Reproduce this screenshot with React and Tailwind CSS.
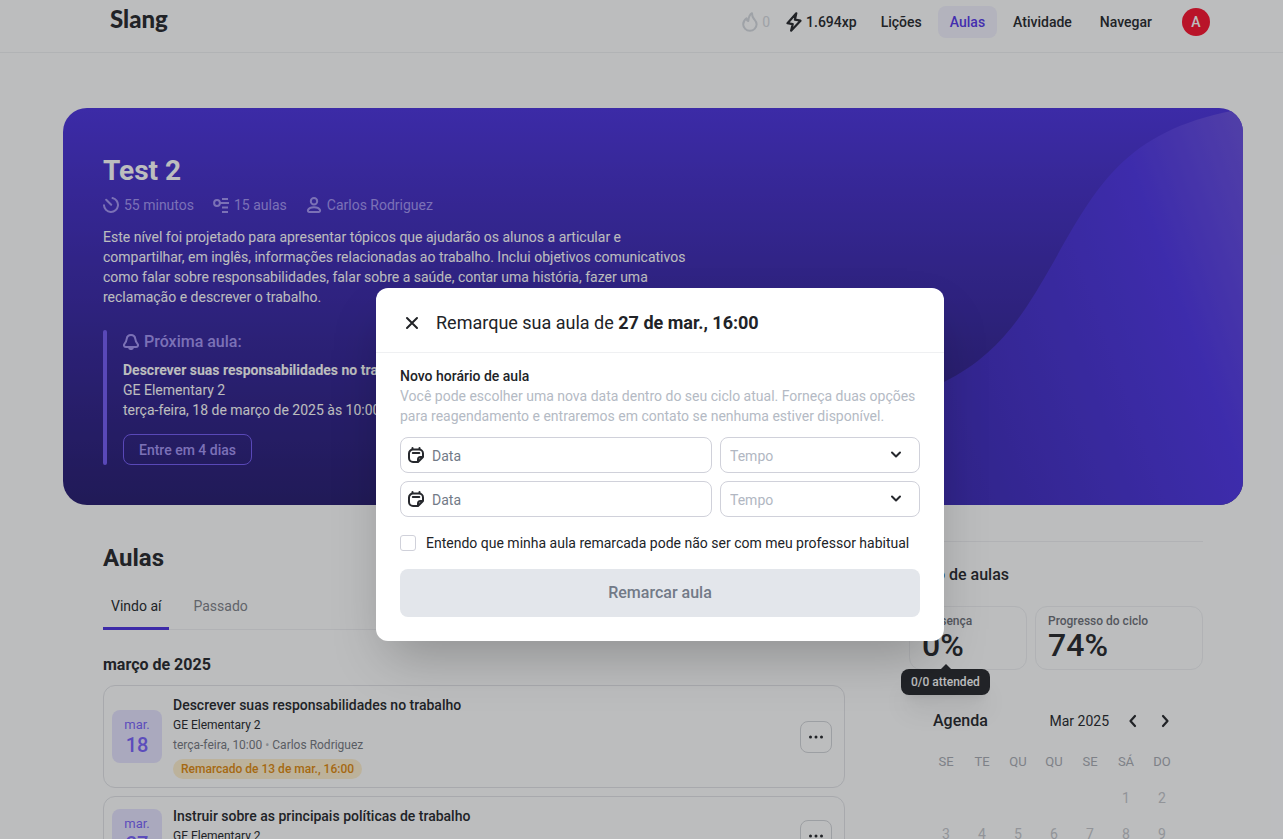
import React from "react";

const base = { fill: "none", stroke: "currentColor", strokeLinecap: "round", strokeLinejoin: "round", "aria-hidden": true };

const FlameIcon = () => (
  <svg {...base} className="h-5 w-4" viewBox="0 0 16 20" strokeWidth="2">
    <path d="M10 1.200C7 3 6.600 5.500 6.300 9c-1.200-.6-1.700-1.500-1.800-2.700C2.600 7.800 1.200 9.800 1.200 12.200c0 3.700 3 6.600 6.700 6.600s6.700-2.900 6.700-6.500c0-2.600-1.200-3.600-2.600-5.300C10.800 5.500 10 3.700 10 1.200z" />
  </svg>
);

const BoltIcon = () => (
  <svg {...base} className="h-5 w-4" viewBox="0 0 16 20" strokeWidth="2.200">
    <path d="M10.300 1.300L1.500 11.200l5.200 1-1.600 6.500 9.400-10-5.600-1z" />
  </svg>
);

const TimerIcon = () => (
  <svg {...base} className="size-4" viewBox="0 0 16 16" strokeWidth="2">
    <path d="M9.500 1.100A7 7 0 1 1 1 8.200M3.200 2.800L8.200 7.800" />
  </svg>
);

const LessonsIcon = () => (
  <svg {...base} className="size-4" viewBox="0 0 16 16" strokeWidth="2" strokeLinecap="butt">
    <circle cx="4" cy="6" r="2.900" />
    <path d="M9 2H15M7 6h9M9 10.500H15M9 15H15" />
  </svg>
);

const PersonIcon = () => (
  <svg {...base} className="size-4" viewBox="0 0 16 16" strokeWidth="2">
    <circle cx="8" cy="4.200" r="3.200" />
    <path d="M3.600 15h8.800c1.400 0 2.100-1 1.500-2.200C13 11 10.600 10.200 8 10.200S3 11 2.100 12.800C1.500 14 2.200 15 3.600 15z" />
  </svg>
);

const BellIcon = () => (
  <svg {...base} className="size-4" viewBox="0 0 16 16" strokeWidth="2">
    <path d="M8 1C5.300 1 4 2.800 3.700 4.800 3.400 7 3.100 7.800 1.800 9.300.3 11 .8 13 2.800 13h10.400c2 0 2.500-2 1-3.700-1.300-1.500-1.600-2.300-1.900-4.500C12 2.800 10.700 1 8 1zM6 13.300c.2 1.200 1 1.800 2 1.800s1.800-.6 2-1.800" />
  </svg>
);

const CalendarIcon = () => (
  <svg {...base} className="size-4" viewBox="0 0 16 16" strokeWidth="2">
    <path d="M10 15H5a4 4 0 0 1-4-4V6.500a4 4 0 0 1 4-4h6a4 4 0 0 1 4 4V10l-5 5zM10 14.800V12.500A2.500 2.500 0 0 1 12.500 10H15M4.500 1v1M11.500 1v1M4.800 6h6.500" />
  </svg>
);

const ChevronDown = () => (
  <svg {...base} className="pointer-events-none col-start-1 row-start-1 mr-4 h-3 w-4 self-center justify-self-end text-[#26282d]" viewBox="0 0 16 12" strokeWidth="2">
    <path d="M4 3.500l4 4 4-4" />
  </svg>
);

const Dots = () => (
  <svg className="h-1 w-4" viewBox="0 0 16 4" fill="currentColor" aria-hidden="true">
    <circle cx="2.500" cy="2" r="1.500" />
    <circle cx="8" cy="2" r="1.500" />
    <circle cx="13.500" cy="2" r="1.500" />
  </svg>
);

function Header() {
  return (
    <header className="border-b border-[#f0f1f3] pt-1.5 pr-[73px] pb-3.5 pl-[110px]">
      <div className="flex h-8 items-center justify-between">
        <a href="#inicio" className="self-start font-[Lato] text-2xl leading-[26px] font-black">Slang</a>
        <div className="flex items-center">
          <div className="flex items-center gap-1 text-[#d5d8de]">
            <FlameIcon />
            <span>0</span>
          </div>
          <div className="mr-3 ml-4 flex items-center gap-1 font-medium">
            <BoltIcon />
            <span>1.694xp</span>
          </div>
          <nav className="mr-[18px] flex gap-1 font-medium">
            <a href="#licoes" className="px-3 py-1.5">Lições</a>
            <a href="#aulas" aria-current="page" className="rounded-lg bg-[#f2f1fe] px-3 py-1.5 text-[#5333ea]">Aulas</a>
            <a href="#atividade" className="px-3 py-1.5">Atividade</a>
            <a href="#navegar" className="px-3 py-1.5">Navegar</a>
          </nav>
          <button className="size-7 rounded-full bg-[#fb0d2a] font-medium text-white" aria-label="Conta">A</button>
        </div>
      </div>
    </header>
  );
}

function Hero() {
  return (
    <section className="relative overflow-hidden rounded-3xl bg-linear-to-b from-[#482ede] to-[#21166c] px-10 pt-[45px] pb-10 text-white">
      <svg className="absolute top-0 right-0 h-full w-[400px]" viewBox="0 0 400 397" preserveAspectRatio="none" aria-hidden="true">
        <defs>
          <linearGradient id="wave" gradientUnits="userSpaceOnUse" x1="-36" y1="13" x2="355" y2="-127">
            <stop offset="0" stopColor="#3825b4" />
            <stop offset="0.7" stopColor="#4a30e5" />
            <stop offset="1" stopColor="#674cdf" />
          </linearGradient>
        </defs>
        <path fill="url(#wave)" d="M400 1C285 20 255 75 210 155C185 198 160 245 101 274C65 290 30 300 0 305V397H400Z" />
      </svg>
      <div className="relative">
        <h1 className="text-[28px] leading-9 font-bold">Test 2</h1>
        <div className="mt-1.5 flex gap-[19px] text-[#a393f4]">
          <span className="flex items-center gap-[5px]"><TimerIcon />55 minutos</span>
          <span className="flex items-center gap-[5px]"><LessonsIcon />15 aulas</span>
          <span className="flex items-center gap-[5px]"><PersonIcon />Carlos Rodriguez</span>
        </div>
        <p className="mt-3 max-w-[600px]">
          Este nível foi projetado para apresentar tópicos que ajudarão os alunos a articular e compartilhar, em inglês, informações relacionadas ao trabalho. Inclui objetivos comunicativos como falar sobre responsabilidades, falar sobre a saúde, contar uma história, fazer uma reclamação e descrever o trabalho.
        </p>
        <div className="mt-[23px] flex gap-4">
          <div className="w-1 rounded-sm bg-[#7258f6]" />
          <div>
            <h2 className="flex items-center gap-[5px] text-base leading-6 font-medium text-[#a393f4]"><BellIcon />Próxima aula:</h2>
            <p className="mt-1.5 font-bold">Descrever suas responsabilidades no trabalho</p>
            <p>GE Elementary 2</p>
            <p>terça-feira, 18 de março de 2025 às 10:00</p>
            <button className="mt-3.5 block h-[31px] rounded-lg border border-[#7258f6] px-[15px] font-medium text-[#a393f4]">Entre em 4 dias</button>
          </div>
        </div>
      </div>
    </section>
  );
}

function LessonCard({ day, title, time, note }) {
  return (
    <article className="flex items-center gap-[11px] rounded-xl border border-[#e2e3e7] py-2 pr-3 pl-2">
      <div className="w-[50px] rounded-lg bg-[#e6e3ff] py-1.5 text-center text-[#765efc]">
        <div className="text-[13px] leading-[18px]">mar.</div>
        <div className="text-xl leading-[23px] font-medium">{day}</div>
      </div>
      <div className="flex-1 pt-px text-xs leading-5">
        <h3 className="text-sm leading-5 font-medium">{title}</h3>
        <p className="leading-5">GE Elementary 2</p>
        <p className="leading-5 text-[#73767d]">{time} <span className="text-[#b4b7bd]">•</span> Carlos Rodriguez</p>
        {note && (
          <p className="mt-1 w-fit rounded-full bg-[#fff0cd] px-2 leading-5 font-medium text-[#e08708]">{note}</p>
        )}
      </div>
      <button aria-label="Mais opções" className="flex size-8 items-center justify-center rounded-lg border border-[#d2d4d8]"><Dots /></button>
    </article>
  );
}

function Lessons() {
  return (
    <section className="min-w-0 flex-1">
      <h2 className="pt-px text-2xl leading-8 font-bold">Aulas</h2>
      <div className="mt-3 flex gap-4 border-b border-[#eff0f2]" role="tablist">
        <button role="tab" aria-selected="true" className="-mb-px h-11 border-b-3 border-[#4a2ee0] px-2 pb-0.5">Vindo aí</button>
        <button role="tab" aria-selected="false" className="-mb-px h-11 border-b-3 border-transparent px-2 pb-0.5 text-[#7d8087]">Passado</button>
      </div>
      <h3 className="mt-[23px] text-base leading-6 font-bold">março de 2025</h3>
      <div className="mt-2 flex flex-col gap-2">
        <LessonCard day="18" title="Descrever suas responsabilidades no trabalho" time="terça-feira, 10:00" note="Remarcado de 13 de mar., 16:00" />
        <LessonCard day="27" title="Instruir sobre as principais políticas de trabalho" time="quinta-feira, 16:00" />
      </div>
    </section>
  );
}

const weekdays = ["SE", "TE", "QU", "QU", "SE", "SÁ", "DO"];
const weeks = [
  ["", "", "", "", "", 1, 2],
  [3, 4, 5, 6, 7, 8, 9],
];

function Sidebar() {
  return (
    <aside className="w-[294px] shrink-0 border-t border-[#eff0f2] pt-[21px]">
      <h2 className="text-base leading-6 font-medium">Ciclo de aulas</h2>
      <div className="mt-[19px] flex gap-2">
        <div className="relative w-[118px] rounded-xl border border-[#eff0f2] px-3 pt-1.5 pb-2">
          <div className="text-xs leading-4 font-medium text-[#6b6e76]">Presença</div>
          <div className="text-[32px] leading-8 font-medium">0%</div>
          <div role="tooltip" className="absolute top-[62px] -left-[9px] rounded-lg bg-[#212327] px-2.5 py-[3px] text-xs leading-5 font-medium whitespace-nowrap text-white shadow-xl">
            <svg className="absolute -top-[5px] left-[39px] h-[6px] w-3" viewBox="0 0 12 6" aria-hidden="true"><path d="M0 6L6 0l6 6z" fill="#212327" /></svg>
            0/0 attended
          </div>
        </div>
        <div className="flex-1 rounded-xl border border-[#eff0f2] px-3 pt-1.5 pb-2">
          <div className="text-xs leading-4 font-medium text-[#6b6e76]">Progresso do ciclo</div>
          <div className="text-[32px] leading-8 font-medium">74%</div>
        </div>
      </div>
      <div className="mt-[39px] flex items-center pr-[30px] pl-6">
        <h2 className="flex-1 text-base leading-6 font-medium">Agenda</h2>
        <span>Mar 2025</span>
        <button aria-label="Mês anterior" className="ml-4">
          <svg {...base} className="size-4" viewBox="0 0 16 16" strokeWidth="2.200"><path d="M10 3L5.500 8l4.500 5" /></svg>
        </button>
        <button aria-label="Próximo mês" className="ml-4">
          <svg {...base} className="size-4" viewBox="0 0 16 16" strokeWidth="2.200"><path d="M6 3l4.500 5L6 13" /></svg>
        </button>
      </div>
      <table className="mt-[11px] ml-[19px] table-fixed text-center">
        <thead>
          <tr className="h-9 text-[13px] text-[#a6a9b1]">
            {weekdays.map((d, i) => <th key={i} scope="col" className="w-9 font-normal">{d}</th>)}
          </tr>
        </thead>
        <tbody>
          {weeks.map((w, i) => (
            <tr key={i} className="h-9 text-[#c3c5ca]">
              {w.map((d, j) => <td key={j} className="w-9">{d}</td>)}
            </tr>
          ))}
        </tbody>
      </table>
    </aside>
  );
}

function SlotRow({ index }) {
  return (
    <div className="flex gap-2">
      <label className="flex h-9 flex-1 items-center gap-2 rounded-lg border border-[#d0d1da] pl-[7px]">
        <span className="text-[#26282d]"><CalendarIcon /></span>
        <input type="text" placeholder="Data" aria-label={`Data ${index}`} className="min-w-0 flex-1 bg-transparent pt-0.5 outline-none placeholder:text-[#727a87]" />
      </label>
      <div className="grid w-[200px]">
        <select aria-label={`Tempo ${index}`} defaultValue="" className="col-start-1 row-start-1 h-9 appearance-none rounded-lg border border-[#d0d1da] bg-white px-[9px] pt-0.5 text-[#b1b7c2]">
          <option value="">Tempo</option>
          <option>10:00</option>
          <option>16:00</option>
        </select>
        <ChevronDown />
      </div>
    </div>
  );
}

function RescheduleDialog() {
  return (
    <div className="absolute inset-0 flex items-start justify-center bg-[#212429]/30 pt-72 pl-[37px]">
      <div role="dialog" aria-modal="true" aria-labelledby="dialog-title" className="w-full max-w-[568px] rounded-xl bg-white shadow-2xl">
        <div className="flex items-center gap-4 border-b border-[#eff0f2] px-7 pt-[21px] pb-[15px]">
          <button aria-label="Fechar">
            <svg {...base} className="size-4" viewBox="0 0 16 16" strokeWidth="2"><path d="M3 3l10 10M13 3L3 13" /></svg>
          </button>
          <h2 id="dialog-title" className="text-lg leading-7">Remarque sua aula de <b className="font-bold">27 de mar., 16:00</b></h2>
        </div>
        <form className="px-6 pt-[13px] pb-6">
          <h3 className="font-medium">Novo horário de aula</h3>
          <p className="text-[#b4bac4]">
            Você pode escolher uma nova data dentro do seu ciclo atual. Forneça duas opções para reagendamento e entraremos em contato se nenhuma estiver disponível.
          </p>
          <div className="mt-[11px] flex flex-col gap-2">
            <SlotRow index={1} />
            <SlotRow index={2} />
          </div>
          <label className="mt-4 flex items-center gap-2.5">
            <input type="checkbox" className="size-4 appearance-none rounded-[3px] border border-[#d0d1da]" />
            Entendo que minha aula remarcada pode não ser com meu professor habitual
          </label>
          <button type="button" disabled className="mt-4 h-12 w-full rounded-lg bg-[#e3e6eb] text-base font-medium text-[#727a87]">Remarcar aula</button>
        </form>
      </div>
    </div>
  );
}

export default function App() {
  return (
    <div className="relative h-screen overflow-hidden bg-white font-[Roboto,sans-serif] text-sm leading-5 text-[#212327]">
      <Header />
      <main className="pt-[55px] pr-10 pl-[63px]">
        <Hero />
        <div className="flex gap-16 pt-9 pr-10 pl-10">
          <Lessons />
          <Sidebar />
        </div>
      </main>
      <RescheduleDialog />
    </div>
  );
}
